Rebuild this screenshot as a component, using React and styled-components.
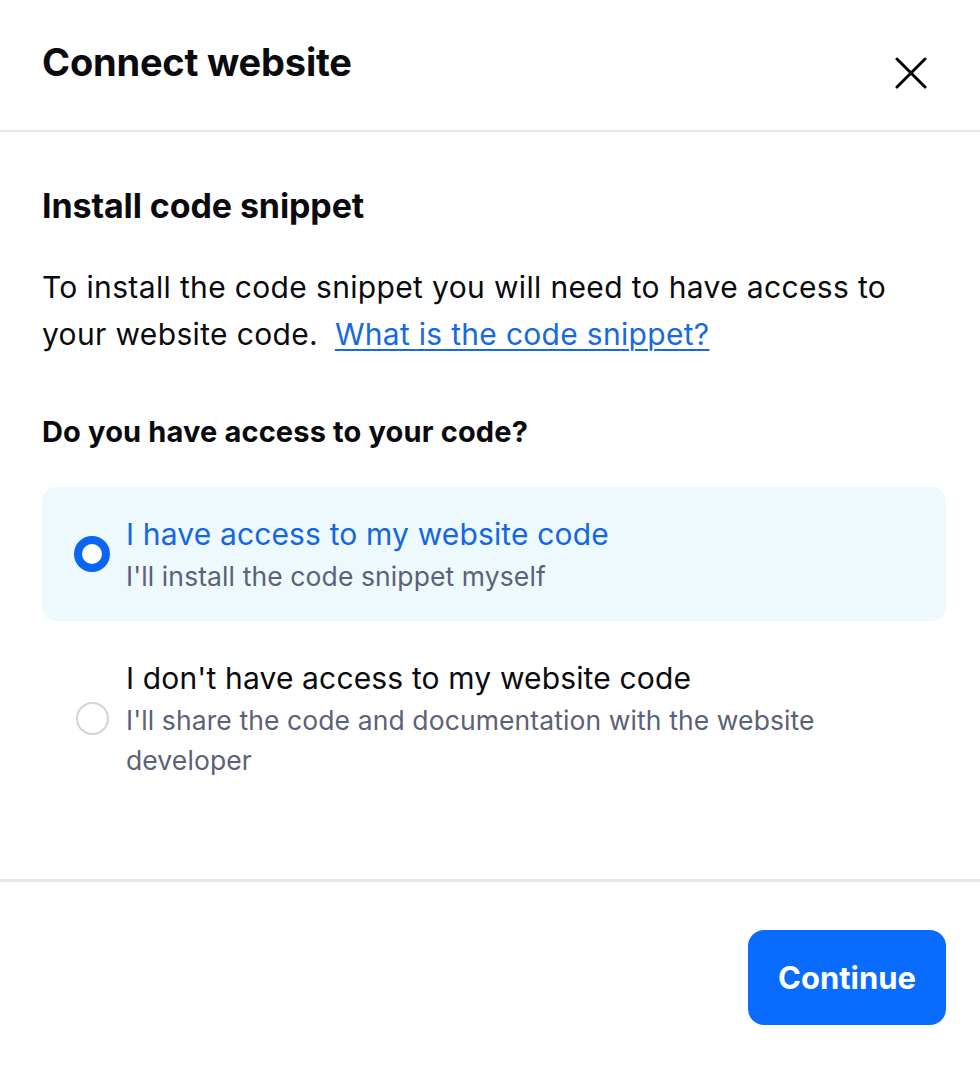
import React, { useState } from "react";
import styled, { createGlobalStyle } from "styled-components";

const GlobalStyle = createGlobalStyle`
  html, body {
    margin: 0;
    padding: 0;
    background: #ffffff;
  }
  body {
    font-family: Inter, "Noto Sans", Arial, sans-serif;
    color: #0b0b0f;
  }
`;

const Modal = styled.div`
  width: 980px;
  height: 1068px;
  display: flex;
  flex-direction: column;
  background: #fff;
`;

const Header = styled.header`
  display: flex;
  justify-content: space-between;
  align-items: flex-start;
  height: 132px;
  box-sizing: border-box;
  padding: 38px 53px 0 42px;
  border-bottom: 2px solid #e6e6eb;
`;

const Title = styled.h1`
  margin: 0;
  font-size: 38px;
  line-height: 48px;
  font-weight: 700;
  letter-spacing: -0.2px;
`;

const CloseButton = styled.button`
  border: none;
  background: none;
  padding: 0;
  margin-top: 19px;
  width: 32px;
  height: 32px;
  cursor: pointer;
  color: #000;
`;

const Body = styled.main`
  flex: 1;
  padding: 54px 34px 0 42px;
`;

const SectionTitle = styled.h2`
  margin: 0;
  font-size: 34px;
  line-height: 40px;
  font-weight: 700;
  letter-spacing: -0.1px;
`;

const Text = styled.p`
  margin: 38px 0 0;
  font-size: 30px;
  line-height: 47px;
  letter-spacing: 0.35px;
  color: #0b0b0f;
`;

const Link = styled.a`
  color: #1769e0;
  text-decoration: underline;
  text-decoration-thickness: 2px;
  text-underline-offset: 4px;
  margin-left: 8px;
  letter-spacing: 0.3px;
`;

const Question = styled.h3`
  margin: 54px 0 0;
  font-size: 29px;
  line-height: 40px;
  font-weight: 700;
  letter-spacing: 0.15px;
`;

const Options = styled.div`
  display: flex;
  flex-direction: column;
  gap: 10px;
  margin-top: 35px;
`;

const Option = styled.label`
  display: flex;
  align-items: center;
  gap: 16px;
  padding: 25px 32px;
  border-radius: 14px;
  background: ${(p) => (p.selected ? "#eef9fd" : "transparent")};
  cursor: pointer;
`;

const Radio = styled.span`
  flex: none;
  width: 36px;
  height: 36px;
  display: flex;
  align-items: center;
  justify-content: center;

  &::before {
    content: "";
    box-sizing: border-box;
    width: ${(p) => (p.checked ? "36px" : "33px")};
    height: ${(p) => (p.checked ? "36px" : "33px")};
    border-radius: 50%;
    border: ${(p) => (p.checked ? "8px solid #0a66f2" : "2px solid #d3d3dd")};
    background: #fff;
  }
`;

const OptionText = styled.div`
  display: flex;
  flex-direction: column;
`;

const OptionTitle = styled.span`
  font-size: 30px;
  line-height: 44px;
  letter-spacing: 0.15px;
  color: ${(p) => (p.selected ? "#1467e2" : "#0b0b0f")};
`;

const OptionSub = styled.span`
  font-size: 26.5px;
  line-height: 40px;
  letter-spacing: 0.1px;
  color: #5b6178;
`;

const Footer = styled.footer`
  display: flex;
  justify-content: flex-end;
  border-top: 3px solid #e6e6ec;
  padding: 48px 34px 43px;
`;

const Button = styled.button`
  width: 198px;
  height: 95px;
  border: none;
  border-radius: 16px;
  background: #0a6cff;
  color: #fff;
  font-family: inherit;
  font-size: 31px;
  font-weight: 700;
  cursor: pointer;
`;

const options = [
  {
    title: "I have access to my website code",
    sub: "I'll install the code snippet myself",
  },
  {
    title: "I don't have access to my website code",
    sub: "I'll share the code and documentation with the website developer",
  },
];

const App = () => {
  const [selected, setSelected] = useState(0);

  return (
    <>
      <GlobalStyle />
      <Modal>
        <Header>
          <Title>Connect website</Title>
          <CloseButton aria-label="Close">
            <svg width="32" height="32" viewBox="0 0 32 32" fill="none">
              <path
                d="M2 2L30 30M30 2L2 30"
                stroke="currentColor"
                strokeWidth="3"
                strokeLinecap="round"
              />
            </svg>
          </CloseButton>
        </Header>
        <Body>
          <SectionTitle>Install code snippet</SectionTitle>
          <Text>
            To install the code snippet you will need to have access to your
            website code. <Link href="#">What is the code snippet?</Link>
          </Text>
          <Question>Do you have access to your code?</Question>
          <Options>
            {options.map((o, i) => (
              <Option
                key={i}
                selected={selected === i}
                onClick={() => setSelected(i)}
              >
                <Radio checked={selected === i} />
                <OptionText>
                  <OptionTitle selected={selected === i}>{o.title}</OptionTitle>
                  <OptionSub>{o.sub}</OptionSub>
                </OptionText>
              </Option>
            ))}
          </Options>
        </Body>
        <Footer>
          <Button>Continue</Button>
        </Footer>
      </Modal>
    </>
  );
};

export default App;
